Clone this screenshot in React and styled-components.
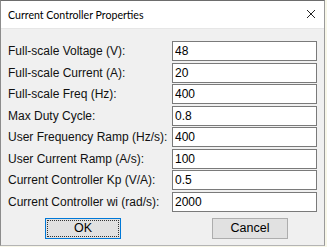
import React from "react";
import styled, { createGlobalStyle } from "styled-components";

const GlobalStyle = createGlobalStyle`
  html, body {
    margin: 0;
    padding: 0;
    background: #f7f6e8;
  }
`;

const Window = styled.div`
  width: 325px;
  height: 246px;
  box-sizing: border-box;
  border-top: 1px solid #6d6d6d;
  border-left: 1px solid #8c8c8c;
  border-right: 1px solid #9a9a9a;
  border-bottom: 1px solid #b4b4b4;
  background: #f0f0f0;
  display: flex;
  flex-direction: column;
`;

const TitleBar = styled.div`
  height: 27px;
  flex: 0 0 27px;
  background: #ffffff;
  border-bottom: 1px solid #e6e6e6;
  display: flex;
  align-items: center;
  justify-content: space-between;
  padding: 0 8px 0 7px;
  font-family: Lato, "Noto Sans", sans-serif;
  font-size: 10.6px;
  color: #000;
`;

const Title = styled.span`
  margin-top: 1px;
`;

const Close = styled.svg`
  width: 10px;
  height: 10px;
  display: block;
  margin-top: -1px;
`;

const Body = styled.div`
  padding: 12px 7px 0 7px;
  display: flex;
  flex-direction: column;
`;

const Grid = styled.div`
  display: grid;
  grid-template-columns: 164px 145px;
  row-gap: 1.57px;
`;

const Label = styled.label`
  font-family: "Liberation Sans", Arial, sans-serif;
  font-size: 12px;
  color: #111;
  display: flex;
  align-items: center;
  height: 20px;
  white-space: nowrap;
`;

const Field = styled.input`
  box-sizing: border-box;
  width: 145px;
  height: 20px;
  margin: 0;
  padding: 0 0 0 2px;
  border: 1px solid #7a7a7a;
  background: #fff;
  font-family: "Liberation Sans", Arial, sans-serif;
  font-size: 12px;
  color: #000;
  outline: none;
`;

const Buttons = styled.div`
  display: flex;
  margin-top: 6px;
  padding-left: 37px;
  gap: 91px;
`;

const Button = styled.button`
  box-sizing: border-box;
  width: 76px;
  height: 21px;
  margin: 0;
  padding: 0;
  background: #e1e1e1;
  border: 1px solid ${(p) => (p.$default ? "#0078d7" : "#adadad")};
  outline: ${(p) => (p.$default ? "1px dotted #333" : "none")};
  outline-offset: -3px;
  font-family: "Liberation Sans", Arial, sans-serif;
  font-size: 12.5px;
  color: #000;
`;

const fields = [
  ["Full-scale Voltage (V):", "48"],
  ["Full-scale Current (A):", "20"],
  ["Full-scale Freq (Hz):", "400"],
  ["Max Duty Cycle:", "0.8"],
  ["User Frequency Ramp (Hz/s):", "400"],
  ["User Current Ramp (A/s):", "100"],
  ["Current Controller Kp (V/A):", "0.5"],
  ["Current Controller wi (rad/s):", "2000"],
];

export default function App() {
  return (
    <>
      <GlobalStyle />
      <Window>
        <TitleBar>
          <Title>Current Controller Properties</Title>
          <Close viewBox="0 0 10 10">
            <path d="M1 1 L9 9 M9 1 L1 9" stroke="#222" strokeWidth="1" fill="none" />
          </Close>
        </TitleBar>
        <Body>
          <Grid>
            {fields.map(([label, value]) => (
              <React.Fragment key={label}>
                <Label>{label}</Label>
                <Field defaultValue={value} />
              </React.Fragment>
            ))}
          </Grid>
          <Buttons>
            <Button $default>OK</Button>
            <Button>Cancel</Button>
          </Buttons>
        </Body>
      </Window>
    </>
  );
}
